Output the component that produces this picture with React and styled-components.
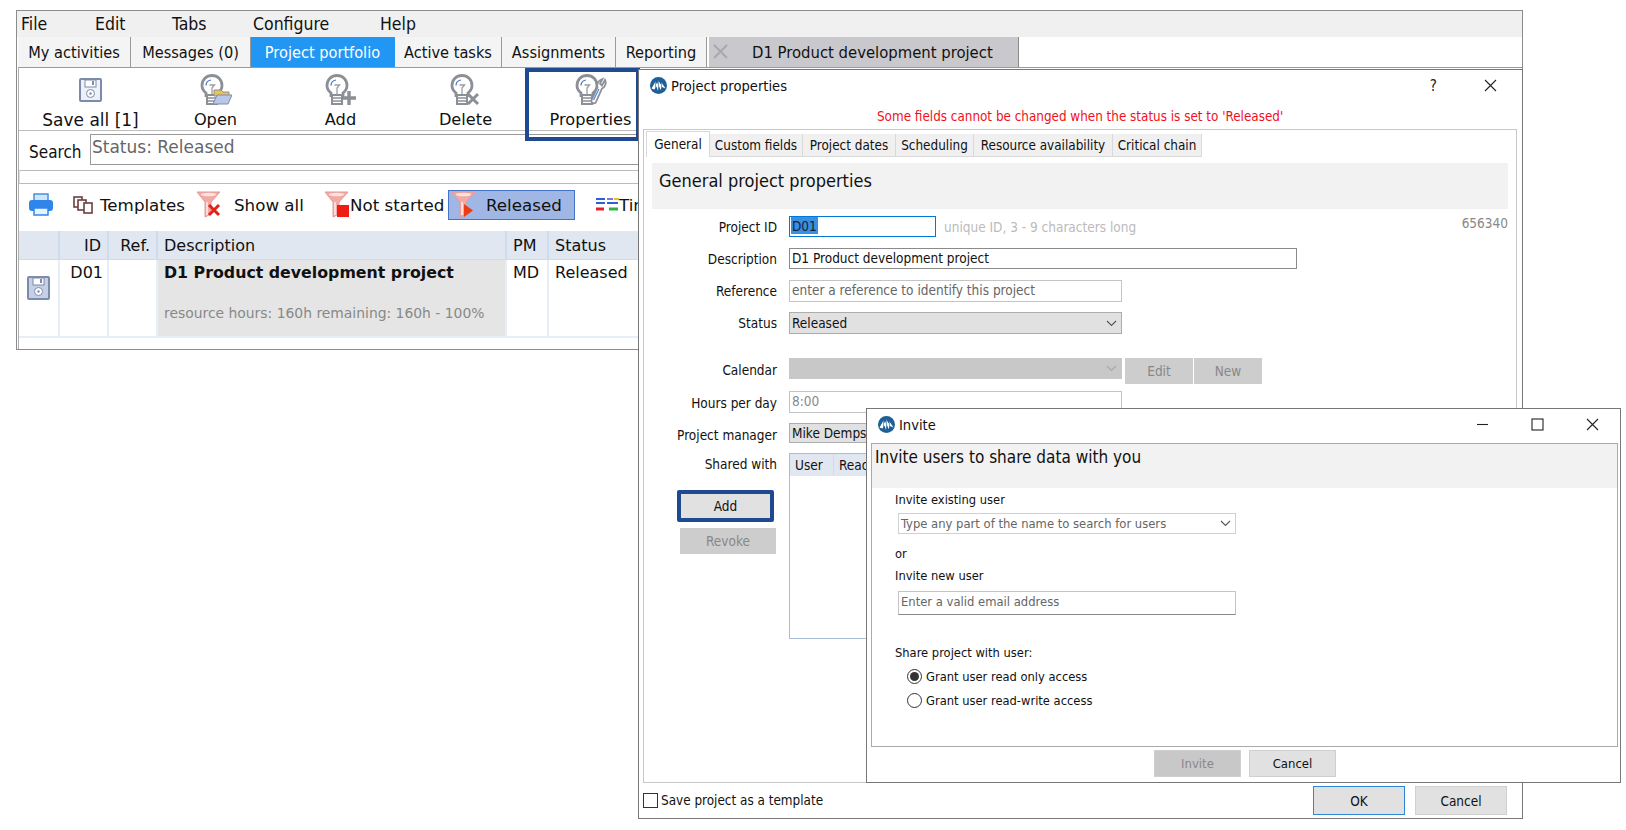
import React from "react";
import styled, { createGlobalStyle } from "styled-components";

const GlobalStyle = createGlobalStyle`
  html, body {
    margin: 0;
    padding: 0;
    background: #fff;
  }
  * {
    box-sizing: border-box;
  }
`;

const UI_FONT = `"DejaVu Sans Condensed", "DejaVu Sans", sans-serif`;
const WIDE_FONT = `"DejaVu Sans", "Liberation Sans", sans-serif`;

const FILTERS = { none: "x", stop: "square", play: "play" };

function Logo() {
  return (
    <svg width="17" height="17" viewBox="0 0 17 17">
      <circle cx="8.5" cy="8.5" r="8.5" fill="#1d5f96" />
      <path d="M1.5 11.5 5.5 4.5l1.5 3 1.5-4 2 4 1-2 4 6-3.5-1.5-1.5 3-1.5-4-1 5-1.5-4.500-2 3z" fill="#fff" />
      <path d="M8.5 4v10M5.5 5v7M11.5 6v6" stroke="#1d5f96" strokeWidth=".6" />
    </svg>
  );
}

function Bulb({ children }) {
  return (
    <svg width="32" height="32" viewBox="0 0 32 32" fill="none">
      <path
        d="M6 23v-4C3.5 17 2 14.5 2 11.5 2 5.5 6.5 1.5 12 1.5s10 4 10 10c0 3-1.5 5.5-4 7.5v4"
        stroke="#8b8f96"
        strokeWidth="2.8"
        fill="#fff"
      />
      <path d="M6 11.5c0-3 2-5 5-5.5" stroke="#4a6fc0" strokeWidth="1.2" />
      <path d="M9.5 11h5l-2.5 3v6" stroke="#9a9da3" strokeWidth="1.3" />
      <path d="M7 21h10v9H7z" fill="#fff" stroke="#8b8f96" strokeWidth="2" />
      <path d="M7 24h10M7 27h10" stroke="#8b8f96" strokeWidth="1.4" />
      {children}
    </svg>
  );
}

function DiskIcon({ tinted }) {
  return (
    <svg width="23" height="24" viewBox="0 0 23 24">
      <rect x="1" y="1" width="21" height="22" rx="1" fill={tinted ? "#c5cfe6" : "#eef1f8"} stroke="#7d8bab" strokeWidth="2" />
      <rect x="6" y="2" width="11" height="7" fill="#fff" stroke="#7d8bab" />
      <rect x="13" y="3" width="2" height="4" fill="#7d8bab" />
      <circle cx="11.5" cy="15.5" r="4" fill="#fff" stroke="#7d8bab" />
      <circle cx="11.5" cy="15.5" r="1.2" fill="#7d8bab" />
    </svg>
  );
}

function PrinterIcon() {
  return (
    <svg width="26" height="25" viewBox="0 0 26 25">
      <path d="M6 9V2h14v7z" fill="#cfe3fb" stroke="#4a8fe0" strokeWidth="1.5" />
      <rect x="1" y="8" width="24" height="11" rx="3" fill="#2f86ea" />
      <path d="M6 16v7h14v-7z" fill="#e8f2fe" stroke="#2f86ea" strokeWidth="1.5" />
    </svg>
  );
}

function TemplatesIcon() {
  return (
    <svg width="20" height="18" viewBox="0 0 20 18" fill="#fff" stroke="#6d3f3f" strokeWidth="1.6">
      <rect x="1" y="1" width="8" height="10" />
      <rect x="5" y="4" width="8" height="10" />
      <rect x="11" y="7" width="8" height="10" />
    </svg>
  );
}

function FunnelIcon({ badge }) {
  return (
    <FunnelSvg width="26" height="27" viewBox="0 0 26 27">
      <path d="M1 1h23l-9 10v12l-6 3V11z" fill="#f4a9a4" stroke="#e59a95" />
      <ellipse cx="12.5" cy="3.5" rx="7.5" ry="1.8" fill="#fbe4e2" />
      <path d="M11 11v13" stroke="#fbdedb" strokeWidth="2" />
      {badge === "x" && (
        <path d="M13 14l10 10M23 14L13 24" stroke="#e2231a" strokeWidth="3" />
      )}
      {badge === "square" && <rect x="13" y="14" width="12" height="12" fill="#ef1c14" />}
      {badge === "play" && <path d="M13 13l9 6.5-9 6.5z" fill="#ef3a14" />}
    </FunnelSvg>
  );
}

function TimelineIcon() {
  return (
    <FunnelSvg width="24" height="15" viewBox="0 0 24 15">
      <path d="M1 2h9M1 6h9" stroke="#2f5fd0" strokeWidth="2" />
      <path d="M12 2h6" stroke="#7a7ad0" strokeWidth="2" />
      <path d="M19 2h5" stroke="#e8c020" strokeWidth="2" />
      <path d="M12 6h11" stroke="#2f5fd0" strokeWidth="2" />
      <path d="M1 12h8" stroke="#e02030" strokeWidth="3" />
      <path d="M14 12h9" stroke="#30b040" strokeWidth="3" />
    </FunnelSvg>
  );
}

function Chevron({ light }) {
  return (
    <svg width="11" height="7" viewBox="0 0 11 7" fill="none">
      <path d="M1 1l4.5 4.5L10 1" stroke={light ? "#a8a8a8" : "#555"} strokeWidth="1.1" />
    </svg>
  );
}

function CloseGlyph() {
  return (
    <svg width="13" height="13" viewBox="0 0 13 13">
      <path d="M1 1l11 11M12 1L1 12" stroke="#222" strokeWidth="1.1" />
    </svg>
  );
}

const toolButtons = [
  { label: "Save all [1]", icon: <DiskIcon />, wide: true },
  {
    label: "Open",
    icon: (
      <Bulb>
        <path d="M14 16h7l2 2h6v4H14z" fill="#e8c25a" stroke="#8b8f96" />
        <path d="M13 30l4-9h15l-4 9z" fill="#b9c8ea" stroke="#7d8bab" />
      </Bulb>
    ),
  },
  {
    label: "Add",
    icon: (
      <Bulb>
        <path d="M24 17v14M17 24h14" stroke="#8b8f96" strokeWidth="3.4" />
      </Bulb>
    ),
  },
  {
    label: "Delete",
    icon: (
      <Bulb>
        <path d="M18 20l10 10M28 20L18 30" stroke="#8b8f96" strokeWidth="3" />
      </Bulb>
    ),
  },
  {
    label: "Properties",
    icon: (
      <Bulb>
        <path
          d="M30 6c1.5 3 .5 7-3 8.5L21 28c-1 2.5-5.5 1-4.5-2l6-12.5c-1-4 1-7 5-8.5l-2.5 4.5 2 2z"
          fill="#fff"
          stroke="#8b8f96"
          strokeWidth="1.8"
        />
        <path d="M18.5 26l5.5-11" stroke="#4a8fe0" strokeWidth="1.3" />
      </Bulb>
    ),
  },
];

const appTabs = [
  { label: "My activities", width: 113 },
  { label: "Messages (0)", width: 120 },
  { label: "Project portfolio", width: 144, active: true },
  { label: "Active tasks", width: 107 },
  { label: "Assignments", width: 114 },
  { label: "Reporting", width: 91 },
];

const dialogTabs = [
  { label: "General", width: 64, active: true },
  { label: "Custom fields", width: 93 },
  { label: "Project dates", width: 93 },
  { label: "Scheduling", width: 78 },
  { label: "Resource availability", width: 139 },
  { label: "Critical chain", width: 89 },
];

export default function App() {
  return (
    <Page>
      <GlobalStyle />
      <MainWindow>
        <MenuBar>
          <MenuItem>File</MenuItem>
          <MenuItem>Edit</MenuItem>
          <MenuItem>Tabs</MenuItem>
          <MenuItem>Configure</MenuItem>
          <MenuItem>Help</MenuItem>
        </MenuBar>
        <AppTabs>
          {appTabs.map((tab) => (
            <AppTab key={tab.label} $width={tab.width} $active={tab.active}>
              {tab.label}
            </AppTab>
          ))}
          <ProjectTab>
            <TabCloseX>
              <svg width="15" height="15" viewBox="0 0 15 15">
                <path d="M1 1l13 13M14 1L1 14" stroke="#a9a9ad" strokeWidth="2" />
              </svg>
            </TabCloseX>
            D1 Product development project
          </ProjectTab>
        </AppTabs>
        <Content>
          <Toolbar>
            {toolButtons.map((btn) => (
              <ToolButton key={btn.label}>
                <ToolIcon>{btn.icon}</ToolIcon>
                <ToolLabel $wide={btn.wide}>{btn.label}</ToolLabel>
              </ToolButton>
            ))}
            <Highlight />
          </Toolbar>
          <SearchRow>
            <SearchLabel>Search</SearchLabel>
            <SearchInput>Status: Released</SearchInput>
          </SearchRow>
          <Divider />
          <FilterBar>
            <FilterIcon>
              <PrinterIcon />
            </FilterIcon>
            <FilterItem $left={19} $width={112}>
              <TemplatesIcon />
              <FilterText $gap={7}>Templates</FilterText>
            </FilterItem>
            <FilterItem $left={11} $width={110}>
              <FunnelIcon badge={FILTERS.none} />
              <FilterText $gap={12}>Show all</FilterText>
            </FilterItem>
            <FilterItem $left={18} $width={118}>
              <FunnelIcon badge={FILTERS.stop} />
              <FilterText $gap={0}>Not started</FilterText>
            </FilterItem>
            <FilterActive>
              <FunnelIcon badge={FILTERS.play} />
              <FilterText $gap={9}>Released</FilterText>
            </FilterActive>
            <FilterItem $left={20} $width={60}>
              <TimelineIcon />
              <FilterText $gap={0}>Timeline</FilterText>
            </FilterItem>
          </FilterBar>
          <Table>
            <HeadCell />
            <HeadCell $right>ID</HeadCell>
            <HeadCell $right>Ref.</HeadCell>
            <HeadCell>Description</HeadCell>
            <HeadCell>PM</HeadCell>
            <HeadCell>Status</HeadCell>
            <BodyCell $center>
              <DiskIcon tinted />
            </BodyCell>
            <BodyCell $right>D01</BodyCell>
            <BodyCell />
            <DescCell>
              <ProjectTitle>D1 Product development project</ProjectTitle>
              <ProjectSub>resource hours: 160h remaining: 160h - 100%</ProjectSub>
            </DescCell>
            <BodyCell>MD</BodyCell>
            <BodyCell>Released</BodyCell>
          </Table>
        </Content>
      </MainWindow>

      <PropertiesDialog>
        <TitleBar $right={25}>
          <Logo />
          <TitleText>Project properties</TitleText>
          <HelpMark>?</HelpMark>
          <TitleControl $margin={47}>
            <CloseGlyph />
          </TitleControl>
        </TitleBar>
        <Warning>Some fields cannot be changed when the status is set to 'Released'</Warning>
        <TabPanel>
          <DialogTabs>
            {dialogTabs.map((tab) => (
              <DialogTab key={tab.label} $width={tab.width} $active={tab.active}>
                {tab.label}
              </DialogTab>
            ))}
          </DialogTabs>
          <SectionHeading>General project properties</SectionHeading>
          <FormRow $top={7}>
            <FieldLabel>Project ID</FieldLabel>
            <TextField $width={147} $height={21} $focus>
              <Selected>D01</Selected>
            </TextField>
            <Hint>unique ID, 3 - 9 characters long</Hint>
            <RecordId>656340</RecordId>
          </FormRow>
          <FormRow $top={11}>
            <FieldLabel>Description</FieldLabel>
            <TextField $width={508} $height={21}>D1 Product development project</TextField>
          </FormRow>
          <FormRow $top={11}>
            <FieldLabel>Reference</FieldLabel>
            <TextField $width={333} $height={22} $muted>enter a reference to identify this project</TextField>
          </FormRow>
          <FormRow $top={10}>
            <FieldLabel>Status</FieldLabel>
            <SelectField $width={333} $height={22}>
              Released
              <Chevron />
            </SelectField>
          </FormRow>
          <FormRow $top={24}>
            <FieldLabel $nudge={-2}>Calendar</FieldLabel>
            <SelectField $width={333} $height={21} $disabled>
              <span />
              <Chevron light />
            </SelectField>
            <SmallButton $margin={3}>Edit</SmallButton>
            <SmallButton $margin={1}>New</SmallButton>
          </FormRow>
          <FormRow $top={7}>
            <FieldLabel $nudge={2}>Hours per day</FieldLabel>
            <TextField $width={333} $height={22} $disabled>8:00</TextField>
          </FormRow>
          <FormRow $top={10}>
            <FieldLabel $nudge={4}>Project manager</FieldLabel>
            <SelectField $width={333} $height={20}>Mike Dempsey</SelectField>
          </FormRow>
          <SharedRow>
            <SharedActions>
              <SharedLabel>Shared with</SharedLabel>
              <AddButton>Add</AddButton>
              <RevokeButton>Revoke</RevokeButton>
            </SharedActions>
            <SharedTable>
              <SharedHead $width={44}>User</SharedHead>
              <SharedHead $width={120}>Read only</SharedHead>
            </SharedTable>
          </SharedRow>
        </TabPanel>
        <DialogFooter>
          <CheckBox />
          <CheckLabel>Save project as a template</CheckLabel>
          <FooterButton $primary>OK</FooterButton>
          <FooterButton>Cancel</FooterButton>
        </DialogFooter>
      </PropertiesDialog>

      <InviteDialog>
        <TitleBar $right={21}>
          <Logo />
          <TitleText>Invite</TitleText>
          <TitleControl $margin={0}>
            <svg width="13" height="13" viewBox="0 0 13 13">
              <path d="M1 6.5h11" stroke="#222" strokeWidth="1.1" />
            </svg>
          </TitleControl>
          <TitleControl $margin={42}>
            <svg width="13" height="13" viewBox="0 0 13 13">
              <rect x="1" y="1" width="11" height="11" fill="none" stroke="#222" strokeWidth="1.1" />
            </svg>
          </TitleControl>
          <TitleControl $margin={42}>
            <CloseGlyph />
          </TitleControl>
        </TitleBar>
        <InvitePanel>
          <InviteHeading>Invite users to share data with you</InviteHeading>
          <InviteBody>
            <InviteLabel $top={3}>Invite existing user</InviteLabel>
            <InviteSelect>
              Type any part of the name to search for users
              <Chevron />
            </InviteSelect>
            <InviteLabel $top={11}>or</InviteLabel>
            <InviteLabel $top={4}>Invite new user</InviteLabel>
            <InviteInput>Enter a valid email address</InviteInput>
            <InviteLabel $top={29}>Share project with user:</InviteLabel>
            <RadioRow $top={5}>
              <Radio $checked />
              Grant user read only access
            </RadioRow>
            <RadioRow $top={6}>
              <Radio />
              Grant user read-write access
            </RadioRow>
          </InviteBody>
        </InvitePanel>
        <InviteFooter>
          <InviteButton $disabled>Invite</InviteButton>
          <InviteButton>Cancel</InviteButton>
        </InviteFooter>
      </InviteDialog>
    </Page>
  );
}

const Page = styled.div`
  position: relative;
  width: 1626px;
  height: 830px;
  padding: 10px 0 0 16px;
  overflow: hidden;
  font-family: ${UI_FONT};
  color: #111;
`;

const MainWindow = styled.div`
  width: 1507px;
  height: 340px;
  border: 1px solid #8c8c8c;
  background: #fff;
`;

const MenuBar = styled.div`
  display: grid;
  grid-template-columns: 74px 77px 81px 127px auto;
  height: 26px;
  padding-left: 4px;
  align-items: center;
  background: #f0f0f0;
  font-size: 17.5px;
`;

const MenuItem = styled.div``;

const AppTabs = styled.div`
  display: flex;
  height: 30px;
  padding-left: 1px;
`;

const AppTab = styled.div`
  display: flex;
  align-items: center;
  justify-content: center;
  width: ${({ $width }) => $width}px;
  font-size: 16.2px;
  background: ${({ $active }) => ($active ? "#2196f3" : "#f4f4f4")};
  color: ${({ $active }) => ($active ? "#fff" : "#111")};
  border-right: 1px solid ${({ $active }) => ($active ? "#2196f3" : "#9a9a9a")};
`;

const ProjectTab = styled.div`
  position: relative;
  display: flex;
  align-items: center;
  width: 310px;
  margin-left: 2px;
  padding-left: 43px;
  font-size: 16.5px;
  background: #c9c9cd;
  border-right: 1px solid #8a8a8a;
`;

const TabCloseX = styled.span`
  position: absolute;
  left: 4px;
  top: 7px;
  line-height: 0;
`;

const Content = styled.div`
  height: 282px;
  margin-left: 1px;
  border-top: 1px solid #9a9a9a;
  border-left: 1px solid #b0b0b0;
`;

const Toolbar = styled.div`
  position: relative;
  display: flex;
  height: 63px;
  padding-left: 9px;
  border-bottom: 1px solid #bdbdbd;
`;

const Highlight = styled.div`
  position: absolute;
  left: 506px;
  top: 0;
  width: 115px;
  height: 73px;
  border: 4px solid #1f4a91;
`;

const ToolButton = styled.div`
  display: flex;
  flex-direction: column;
  align-items: center;
  width: 125px;
  padding-top: 6px;
`;

const ToolIcon = styled.div`
  display: flex;
  align-items: center;
  justify-content: center;
  height: 32px;
  line-height: 0;
`;

const ToolLabel = styled.div`
  margin-top: 4px;
  font-family: ${WIDE_FONT};
  font-size: ${({ $wide }) => ($wide ? "17px" : "16.2px")};
  line-height: 20px;
`;

const SearchRow = styled.div`
  display: flex;
  height: 39px;
  padding: 3px 0 0 10px;
`;

const SearchLabel = styled.div`
  width: 61px;
  padding-top: 8px;
  font-size: 17px;
`;

const SearchInput = styled.div`
  width: 700px;
  height: 31px;
  padding-left: 1px;
  border: 1px solid #999;
  font-family: ${WIDE_FONT};
  font-size: 17px;
  line-height: 25px;
  color: #666;
`;

const Divider = styled.div`
  height: 14px;
  border-top: 1px solid #bbb;
  border-bottom: 1px solid #bbb;
  border-left: 1px solid #ddd;
`;

const FilterBar = styled.div`
  display: flex;
  align-items: center;
  height: 47px;
  padding-bottom: 6px;
  padding-left: 9px;
  font-family: ${WIDE_FONT};
  font-size: 16.7px;
`;

const FilterIcon = styled.div`
  line-height: 0;
  width: 26px;
`;

const FunnelSvg = styled.svg`
  flex-shrink: 0;
`;

const FilterItem = styled.div`
  display: flex;
  align-items: center;
  flex-shrink: 0;
  margin-left: ${({ $left }) => $left}px;
  width: ${({ $width }) => $width}px;
  white-space: nowrap;
`;

const FilterActive = styled.div`
  display: flex;
  align-items: center;
  flex-shrink: 0;
  width: 127px;
  height: 30px;
  margin-left: 6px;
  padding-left: 2px;
  background: #a0b6e4;
  border: 1px solid #4472c4;
`;

const FilterText = styled.span`
  margin-left: ${({ $gap }) => $gap}px;
`;

const Table = styled.div`
  display: grid;
  grid-template-columns: 41px 49px 49px 349px 42px 160px;
  grid-template-rows: 29px 78px;
  font-family: ${WIDE_FONT};
  font-size: 16px;
`;

const HeadCell = styled.div`
  display: flex;
  align-items: center;
  justify-content: ${({ $right }) => ($right ? "flex-end" : "flex-start")};
  padding: 0 6px;
  background: #e0e7f0;
  border-right: 2px solid #cddcee;
  border-bottom: 1px solid #cddcee;
`;

const BodyCell = styled.div`
  display: flex;
  justify-content: ${({ $right, $center }) => ($right ? "flex-end" : $center ? "center" : "flex-start")};
  padding: ${({ $center, $right }) => ($center ? "16px 0 0" : $right ? "3px 4px 0 6px" : "3px 6px 0")};
  border-right: 2px solid #e8eef5;
  border-bottom: 2px solid #e8eef5;
  line-height: 20px;
`;

const DescCell = styled.div`
  padding: 3px 6px 0;
  background: #e5e5e5;
  border-right: 2px solid #e8eef5;
  border-bottom: 2px solid #e8eef5;
`;

const ProjectTitle = styled.div`
  font-weight: bold;
  font-size: 15.8px;
  line-height: 20px;
`;

const ProjectSub = styled.div`
  margin-top: 21px;
  font-size: 13.9px;
  line-height: 18px;
  color: #888;
`;

const Dialog = styled.div`
  position: absolute;
  display: flex;
  flex-direction: column;
  background: #fff;
  border: 1px solid #777;
`;

const PropertiesDialog = styled(Dialog)`
  left: 638px;
  top: 69px;
  width: 885px;
  height: 750px;
`;

const InviteDialog = styled(Dialog)`
  left: 866px;
  top: 408px;
  width: 755px;
  height: 375px;
`;

const TitleBar = styled.div`
  display: flex;
  align-items: center;
  flex-shrink: 0;
  height: 34px;
  padding: 0 ${({ $right }) => $right}px 3px 11px;
  line-height: 0;
`;

const TitleText = styled.div`
  flex: 1;
  margin-left: 4px;
  font-size: 14.6px;
  line-height: 18px;
`;

const HelpMark = styled.div`
  font-size: 15px;
  line-height: 18px;
  color: #222;
`;

const TitleControl = styled.div`
  margin-left: ${({ $margin }) => $margin}px;
  line-height: 0;
`;

const Warning = styled.div`
  height: 25px;
  padding-left: 238px;
  font-size: 13.35px;
  line-height: 26px;
  color: #f01020;
`;

const TabPanel = styled.div`
  height: 654px;
  margin: 0 5px 0 4px;
  padding: 1px 8px 0;
  border: 1px solid #c8c8c8;
`;

const DialogTabs = styled.div`
  display: flex;
  align-items: flex-end;
  height: 26px;
  margin-left: -6px;
`;

const DialogTab = styled.div`
  display: flex;
  align-items: center;
  justify-content: center;
  width: ${({ $width }) => $width}px;
  height: ${({ $active }) => ($active ? "26px" : "23px")};
  font-size: 13.4px;
  background: ${({ $active }) => ($active ? "#fff" : "#f0f0f0")};
  border: 1px solid #d9d9d9;
  border-width: ${({ $active }) => ($active ? "1px 1px 0" : "0 1px 1px 0")};
`;

const SectionHeading = styled.div`
  height: 46px;
  margin-top: 6px;
  margin-bottom: 2px;
  padding-left: 7px;
  font-size: 18px;
  line-height: 35px;
  background: #f2f2f2;
`;

const FormRow = styled.div`
  display: flex;
  align-items: center;
  margin-top: ${({ $top }) => $top}px;
`;

const FieldLabel = styled.div`
  width: 125px;
  margin-right: 12px;
  padding-top: ${({ $nudge }) => ($nudge > 0 ? $nudge : 0)}px;
  padding-bottom: ${({ $nudge }) => ($nudge < 0 ? -$nudge : 0)}px;
  font-size: 13.5px;
  text-align: right;
`;

const TextField = styled.div`
  width: ${({ $width }) => $width}px;
  height: ${({ $height }) => $height}px;
  padding-left: ${({ $focus }) => ($focus ? "1px" : "2px")};
  font-size: 13.5px;
  line-height: 18px;
  white-space: nowrap;
  border: 1px solid ${({ $focus, $muted, $disabled }) => ($focus ? "#0078d7" : $muted || $disabled ? "#c4c4c4" : "#8a8a8a")};
  color: ${({ $muted, $disabled }) => ($disabled ? "#888" : $muted ? "#666" : "#111")};
`;

const Selected = styled.span`
  display: inline-block;
  height: 17px;
  padding: 0 1px;
  background: #3a8fe0;
  color: #10233c;
`;

const Hint = styled.div`
  margin-left: 8px;
  font-size: 13.5px;
  color: #bbb;
`;

const RecordId = styled.div`
  margin-left: auto;
  margin-top: -8px;
  font-size: 13.5px;
  color: #888;
`;

const SelectField = styled.div`
  display: flex;
  align-items: center;
  justify-content: space-between;
  align-self: flex-start;
  width: ${({ $width }) => $width}px;
  height: ${({ $height }) => $height}px;
  padding: 0 4px 0 2px;
  font-size: 13.5px;
  white-space: nowrap;
  background: ${({ $disabled }) => ($disabled ? "#c8c8c8" : "#e1e1e1")};
  border: 1px solid ${({ $disabled }) => ($disabled ? "#c8c8c8" : "#adadad")};
`;

const SmallButton = styled.div`
  display: flex;
  align-items: center;
  justify-content: center;
  align-self: flex-start;
  width: 68px;
  height: 26px;
  margin-left: ${({ $margin }) => $margin}px;
  font-size: 13.5px;
  background: #cdcdcd;
  color: #888;
`;

const SharedRow = styled.div`
  display: flex;
  margin-top: 10px;
`;

const SharedActions = styled.div`
  display: flex;
  flex-direction: column;
  align-items: flex-start;
  width: 137px;
`;

const SharedLabel = styled.div`
  width: 125px;
  padding-top: 2px;
  font-size: 13.5px;
  line-height: 18px;
  text-align: right;
`;

const AddButton = styled.div`
  display: flex;
  align-items: center;
  justify-content: center;
  width: 97px;
  height: 32px;
  margin: 17px 0 0 25px;
  font-size: 13.5px;
  background: #e1e1e1;
  border: 4px solid #1f4a91;
  border-radius: 2px;
`;

const RevokeButton = styled.div`
  display: flex;
  align-items: center;
  justify-content: center;
  width: 96px;
  height: 26px;
  margin: 6px 0 0 28px;
  font-size: 13.5px;
  background: #cdcdcd;
  color: #888;
`;

const SharedTable = styled.div`
  display: flex;
  align-items: flex-start;
  width: 400px;
  height: 186px;
  border: 1px solid #a8bcd8;
`;

const SharedHead = styled.div`
  width: ${({ $width }) => $width}px;
  height: 22px;
  padding-left: 5px;
  font-size: 13.5px;
  line-height: 22px;
  background: #e0e7f0;
  border-right: 1px solid #cddcee;
`;

const DialogFooter = styled.div`
  display: flex;
  align-items: center;
  flex: 1;
  padding: 0 15px 0 4px;
`;

const CheckBox = styled.div`
  width: 15px;
  height: 15px;
  background: #fff;
  border: 1px solid #333;
`;

const CheckLabel = styled.div`
  flex: 1;
  margin-left: 3px;
  font-size: 13.4px;
`;

const FooterButton = styled.div`
  display: flex;
  align-items: center;
  justify-content: center;
  width: 92px;
  height: 29px;
  margin-left: ${({ $primary }) => ($primary ? "0" : "10px")};
  font-size: 13.5px;
  background: #e1e1e1;
  border: ${({ $primary }) => ($primary ? "1.5px solid #2f87d8" : "1px solid #d0d0d0")};
`;

const InvitePanel = styled.div`
  height: 304px;
  margin: 0 2px 0 4px;
  border: 1px solid #aaa;
`;

const InviteHeading = styled.div`
  height: 44px;
  padding: 1px 0 0 3px;
  font-size: 17px;
  line-height: 24px;
  background: #f2f2f2;
`;

const InviteBody = styled.div`
  padding-left: 23px;
`;

const InviteLabel = styled.div`
  margin-top: ${({ $top }) => $top}px;
  font-size: 12.8px;
  line-height: 18px;
`;

const InviteSelect = styled.div`
  display: flex;
  align-items: center;
  justify-content: space-between;
  width: 338px;
  height: 21px;
  margin: 4px 0 0 3px;
  padding: 0 4px 0 2px;
  font-size: 12.9px;
  color: #666;
  border: 1px solid #d0d0d0;
`;

const InviteInput = styled.div`
  width: 338px;
  height: 24px;
  margin: 6px 0 0 3px;
  padding-left: 2px;
  font-size: 12.9px;
  line-height: 19px;
  color: #666;
  border: 1px solid #c4c4c4;
  border-bottom-color: #888;
`;

const RadioRow = styled.div`
  display: flex;
  align-items: center;
  height: 18px;
  margin-top: ${({ $top }) => $top}px;
  padding-left: 12px;
  font-size: 12.8px;
`;

const Radio = styled.span`
  display: flex;
  align-items: center;
  justify-content: center;
  width: 15px;
  height: 15px;
  margin-right: 4px;
  border: 1px solid #333;
  border-radius: 50%;

  &::after {
    content: "";
    display: ${({ $checked }) => ($checked ? "block" : "none")};
    width: 9px;
    height: 9px;
    border-radius: 50%;
    background: #333;
  }
`;

const InviteFooter = styled.div`
  display: flex;
  gap: 8px;
  padding: 3px 0 0 287px;
`;

const InviteButton = styled.div`
  display: flex;
  align-items: center;
  justify-content: center;
  width: 87px;
  height: 27px;
  font-size: 13px;
  background: ${({ $disabled }) => ($disabled ? "#c8c8c8" : "#e1e1e1")};
  color: ${({ $disabled }) => ($disabled ? "#888" : "#111")};
  border: 1px solid #cfcfcf;
`;
